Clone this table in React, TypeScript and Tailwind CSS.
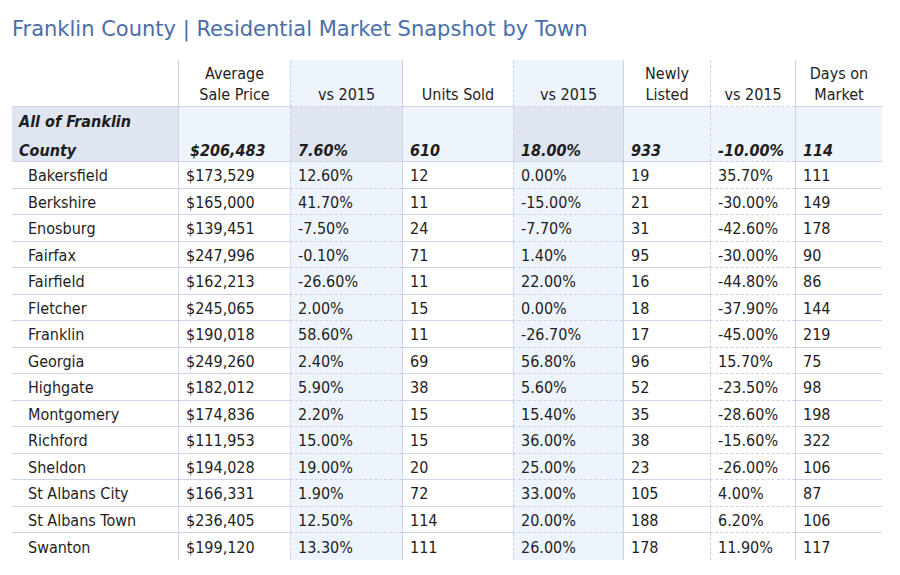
import React from 'react'

type Row = [string, string, string, string, string, string, string, string]

const TOWNS: Row[] = [
  ['Bakersfield', '$173,529', '12.60%', '12', '0.00%', '19', '35.70%', '111'],
  ['Berkshire', '$165,000', '41.70%', '11', '-15.00%', '21', '-30.00%', '149'],
  ['Enosburg', '$139,451', '-7.50%', '24', '-7.70%', '31', '-42.60%', '178'],
  ['Fairfax', '$247,996', '-0.10%', '71', '1.40%', '95', '-30.00%', '90'],
  ['Fairfield', '$162,213', '-26.60%', '11', '22.00%', '16', '-44.80%', '86'],
  ['Fletcher', '$245,065', '2.00%', '15', '0.00%', '18', '-37.90%', '144'],
  ['Franklin', '$190,018', '58.60%', '11', '-26.70%', '17', '-45.00%', '219'],
  ['Georgia', '$249,260', '2.40%', '69', '56.80%', '96', '15.70%', '75'],
  ['Highgate', '$182,012', '5.90%', '38', '5.60%', '52', '-23.50%', '98'],
  ['Montgomery', '$174,836', '2.20%', '15', '15.40%', '35', '-28.60%', '198'],
  ['Richford', '$111,953', '15.00%', '15', '36.00%', '38', '-15.60%', '322'],
  ['Sheldon', '$194,028', '19.00%', '20', '25.00%', '23', '-26.00%', '106'],
  ['St Albans City', '$166,331', '1.90%', '72', '33.00%', '105', '4.00%', '87'],
  ['St Albans Town', '$236,405', '12.50%', '114', '20.00%', '188', '6.20%', '106'],
  ['Swanton', '$199,120', '13.30%', '111', '26.00%', '178', '11.90%', '117'],
]

const TOTAL: Row = ['', '$206,483', '7.60%', '610', '18.00%', '933', '-10.00%', '114']

const HEADERS: string[][] = [
  [],
  ['Average', 'Sale Price'],
  ['vs 2015'],
  ['Units Sold'],
  ['vs 2015'],
  ['Newly', 'Listed'],
  ['vs 2015'],
  ['Days on', 'Market'],
]

// left rule for each column: none, solid, or dashed
const RULES = [
  '',
  'border-l border-[#ccd2ea]',
  'border-l border-dashed border-[#cdd1e3]',
  'border-l border-[#ccd2ea]',
  'border-l border-dashed border-[#cdd1e3]',
  'border-l border-[#ccd2ea]',
  'border-l border-dashed border-[#cdd1e3]',
  'border-l border-[#ccd2ea]',
]

const SHADED = new Set([2, 4])

export default function App() {
  return (
    <div
      className="h-[575px] w-[900px] overflow-hidden bg-white px-3 text-[#1e1e1e]"
      style={{ fontFamily: '"DejaVu Sans Condensed", "DejaVu Sans", sans-serif' }}
    >
      <h1
        className="pt-[15px] text-[21px] leading-[28px] text-[#4a6eab]"
        style={{ fontFamily: '"DejaVu Sans", sans-serif' }}
      >
        Franklin County | Residential Market Snapshot by Town
      </h1>

      <div className="mt-[17px] grid w-[870px] grid-cols-[166px_112px_112px_111px_110px_87px_85px_87px] text-[16px]">
        {/* header */}
        {HEADERS.map((lines, i) => (
          <div
            key={`h${i}`}
            className={`flex h-[47px] flex-col items-center justify-end border-b border-[#ccd2ea] pb-[1px] text-center leading-[21px] ${RULES[i]} ${SHADED.has(i) ? 'bg-[#eef4fc]' : ''}`}
          >
            {lines.map((l) => (
              <span key={l}>{l}</span>
            ))}
          </div>
        ))}

        {/* county total */}
        {TOTAL.map((v, i) => (
          <div
            key={`t${i}`}
            className={`flex h-[55px] items-end border-b border-[#ccd2ea] pl-[7px] font-bold italic leading-[29px] ${RULES[i]} ${i === 0 || SHADED.has(i) ? 'bg-[#dfe6f1]' : 'bg-[#eef4fb]'}`}
          >
            <span className={`-mb-[4px] ${i === 1 ? 'pl-[4px]' : ''}`}>
              {i === 0 ? (
                <>
                  All of Franklin
                  <br />
                  County
                </>
              ) : (
                v
              )}
            </span>
          </div>
        ))}

        {/* towns */}
        {TOWNS.map((row, r) =>
          row.map((v, i) => (
            <div
              key={`${r}-${i}`}
              className={`flex h-[26.5px] items-center pt-[3px] ${r < TOWNS.length - 1 ? 'border-b border-[#ccd2ea]' : ''} ${i === 0 ? 'pl-4' : 'pl-[7px]'} ${RULES[i]} ${SHADED.has(i) ? 'bg-[#eef4fc]' : ''}`}
            >
              {v}
            </div>
          )),
        )}
      </div>
    </div>
  )
}
